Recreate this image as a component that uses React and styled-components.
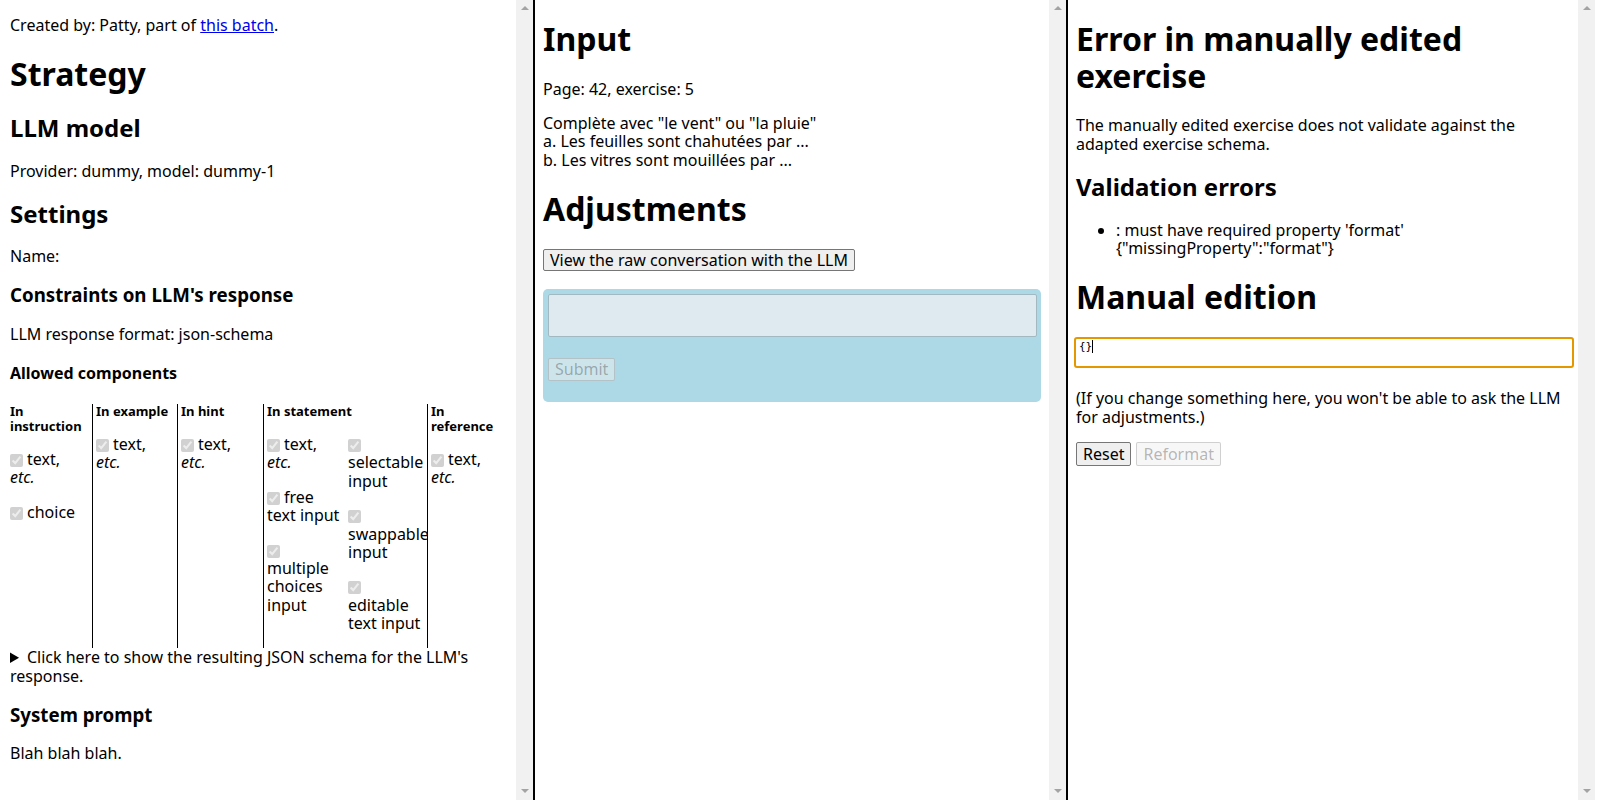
import React from "react";
import styled, { createGlobalStyle } from "styled-components";

const GlobalStyle = createGlobalStyle`
  html, body {
    margin: 0;
    padding: 0;
  }
  body {
    font-family: "Noto Sans", "Open Sans", sans-serif;
    font-size: 16px;
    line-height: 1.15;
    color: #000;
    background: #fff;
  }
`;

const Layout = styled.div`
  display: grid;
  grid-template-columns: 533px 533px 529px;
  height: 100vh;
`;

const Column = styled.section`
  box-sizing: border-box;
  height: 100vh;
  display: flex;
  border-left: ${(p) => (p.$divided ? "2px solid #000" : "0")};
  background: #fff;
`;

const ColumnBody = styled.div`
  flex: 1 1 auto;
  min-width: 0;
  box-sizing: border-box;
  overflow-y: auto;
  padding: ${(p) => p.$pad};
`;

const ScrollTrack = styled.div`
  flex: 0 0 17px;
  box-sizing: border-box;
  background: #f1f1f1;
  display: flex;
  flex-direction: column;
  justify-content: space-between;
  align-items: center;
  padding: 6px 0 7px;
`;

const ArrowIcon = styled.svg`
  display: block;
  width: 8px;
  height: 4px;
  fill: #a3a3a3;
`;

function Scrollbar() {
  return (
    <ScrollTrack aria-hidden="true">
      <ArrowIcon viewBox="0 0 8 4">
        <polygon points="0,4 4,0 8,4" />
      </ArrowIcon>
      <ArrowIcon viewBox="0 0 8 4">
        <polygon points="0,0 8,0 4,4" />
      </ArrowIcon>
    </ScrollTrack>
  );
}

const P = styled.p`
  margin: 16px 0;
`;

const H1 = styled.h1`
  font-size: 32px;
  font-weight: 700;
  margin: 21.44px 0;
`;

const H2 = styled.h2`
  font-size: 24px;
  font-weight: 700;
  margin: 19.92px 0;
`;

const H3 = styled.h3`
  font-size: 18.72px;
  font-weight: 700;
  margin: 18.72px 0;
`;

const H4 = styled.h4`
  font-size: 16px;
  font-weight: 700;
  margin: 21.28px 0;
`;

const Link = styled.a`
  color: #0000ee;
  text-decoration: underline;
`;

const ComponentsGrid = styled.div`
  display: grid;
  grid-template-columns: 82px 85px 86px 164px 80px;
  align-items: stretch;
`;

const Cell = styled.div`
  box-sizing: border-box;
  border-left: ${(p) => (p.$first ? "0" : "1px solid #000")};
  padding: ${(p) => p.$pad};
  overflow: hidden;
  min-width: 0;
`;

const CellHeader = styled.div`
  font-size: 13px;
  font-weight: 700;
  line-height: 1.15;
`;

const SubColumns = styled.div`
  display: grid;
  grid-template-columns: 81px 76px;
`;

const SubColumn = styled.div`
  min-width: 0;
  padding-right: ${(p) => p.$padRight || "0"};
`;

const Item = styled.p`
  margin: 16px 0;
`;

const Checkbox = styled.input.attrs({
  type: "checkbox",
  defaultChecked: true,
  disabled: true,
})`
  width: 13px;
  height: 13px;
  margin: 0 4px 0 0;
  vertical-align: -2px;
`;

const Details = styled.details`
  margin: 0;
`;

const Summary = styled.summary`
  cursor: default;
`;

const ButtonRow = styled.div`
  display: flex;
  gap: 5px;
  margin: 16px 0;
`;

const Button = styled.button`
  font-family: inherit;
  font-size: 16px;
  line-height: 1.15;
  margin: 0;
  padding: ${(p) => (p.$tall ? "2px 6px" : "1px 6px")};
  border-radius: 2px;
  border: 1px solid
    ${(p) => (p.disabled ? "rgba(118, 118, 118, 0.3)" : "#767676")};
  background: ${(p) =>
    p.disabled ? "rgba(239, 239, 239, 0.5)" : "#efefef"};
  color: ${(p) => (p.disabled ? "rgba(16, 16, 16, 0.3)" : "#000")};
`;

const AdjustmentBox = styled.div`
  margin-top: 18px;
  background: #add8e6;
  border-radius: 5px;
  padding: 5px 4px 21px 5px;
  display: flex;
  flex-direction: column;
  align-items: flex-start;
`;

const AdjustmentText = styled.textarea`
  display: block;
  box-sizing: border-box;
  width: 100%;
  height: 43px;
  margin: 0;
  padding: 2px;
  resize: none;
  background: #dfeaf0;
  border: 1px solid #a3b9c1;
  border-radius: 2px;
  font-family: "DejaVu Sans Mono", monospace;
  font-size: 13px;
`;

const SubmitButton = styled(Button)`
  margin-top: 21px;
`;

const ErrorList = styled.ul`
  margin: 16px 0;
  padding-left: 40px;
`;

const CodeBox = styled.div`
  box-sizing: border-box;
  height: 31px;
  margin: 21px -2px;
  padding: 1px 3px;
  border: 2px solid #e59700;
  border-radius: 3px;
  font-family: "DejaVu Sans Mono", "Liberation Mono", monospace;
  font-size: 11px;
  line-height: 1.15;
`;

const Caret = styled.span`
  display: inline-block;
  width: 1px;
  height: 13px;
  background: #000;
  vertical-align: -3px;
`;

function TextEtc() {
  return (
    <>
      <Checkbox />
      text, <em>etc.</em>
    </>
  );
}

function StrategyColumn() {
  return (
    <Column>
      <ColumnBody $pad="0 8px 0 10px">
        <P>
          Created by: Patty, part of <Link href="#">this batch</Link>.
        </P>
        <H1>Strategy</H1>
        <H2>LLM model</H2>
        <P>Provider: dummy, model: dummy-1</P>
        <H2>Settings</H2>
        <P>Name: </P>
        <H3>Constraints on LLM's response</H3>
        <P>LLM response format: json-schema</P>
        <H4>Allowed components</H4>
        <ComponentsGrid>
          <Cell $first $pad="0 6px 0 0">
            <CellHeader>In instruction</CellHeader>
            <Item>
              <TextEtc />
            </Item>
            <Item>
              <Checkbox />
              choice
            </Item>
          </Cell>
          <Cell $pad="0 5px 0 3px">
            <CellHeader>In example</CellHeader>
            <Item>
              <TextEtc />
            </Item>
          </Cell>
          <Cell $pad="0 6px 0 3px">
            <CellHeader>In hint</CellHeader>
            <Item>
              <TextEtc />
            </Item>
          </Cell>
          <Cell $pad="0 3px 0 3px">
            <CellHeader>In statement</CellHeader>
            <SubColumns>
              <SubColumn $padRight="6px">
                <Item>
                  <TextEtc />
                </Item>
                <Item>
                  <Checkbox />
                  free text input
                </Item>
                <Item>
                  <Checkbox />
                  multiple choices input
                </Item>
              </SubColumn>
              <SubColumn>
                <Item>
                  <Checkbox />
                  selectable input
                </Item>
                <Item>
                  <Checkbox />
                  swappable input
                </Item>
                <Item>
                  <Checkbox />
                  editable text input
                </Item>
              </SubColumn>
            </SubColumns>
          </Cell>
          <Cell $pad="0 5px 0 3px">
            <CellHeader>In reference</CellHeader>
            <Item>
              <TextEtc />
            </Item>
          </Cell>
        </ComponentsGrid>
        <Details>
          <Summary>
            Click here to show the resulting JSON schema for the LLM's
            response.
          </Summary>
        </Details>
        <H3>System prompt</H3>
        <P>Blah blah blah.</P>
      </ColumnBody>
      <Scrollbar />
    </Column>
  );
}

function InputColumn() {
  return (
    <Column $divided>
      <ColumnBody $pad="0 8px 0 8px">
        <H1>Input</H1>
        <P>Page: 42, exercise: 5</P>
        <P>
          Complète avec "le vent" ou "la pluie"
          <br />
          a. Les feuilles sont chahutées par ...
          <br />
          b. Les vitres sont mouillées par ...
        </P>
        <H1>Adjustments</H1>
        <ButtonRow>
          <Button>View the raw conversation with the LLM</Button>
        </ButtonRow>
        <AdjustmentBox>
          <AdjustmentText defaultValue="" />
          <SubmitButton disabled>Submit</SubmitButton>
        </AdjustmentBox>
      </ColumnBody>
      <Scrollbar />
    </Column>
  );
}

function EditionColumn() {
  return (
    <Column $divided>
      <ColumnBody $pad="0 6px 0 8px">
        <H1>Error in manually edited exercise</H1>
        <P>
          The manually edited exercise does not validate against the adapted
          exercise schema.
        </P>
        <H2>Validation errors</H2>
        <ErrorList>
          <li>
            : must have required property 'format'
            <br />
            {'{"missingProperty":"format"}'}
          </li>
        </ErrorList>
        <H1>Manual edition</H1>
        <CodeBox>
          {"{}"}
          <Caret />
        </CodeBox>
        <P>
          (If you change something here, you won't be able to ask the LLM for
          adjustments.)
        </P>
        <ButtonRow>
          <Button $tall>Reset</Button>
          <Button $tall disabled>
            Reformat
          </Button>
        </ButtonRow>
      </ColumnBody>
      <Scrollbar />
    </Column>
  );
}

export default function App() {
  return (
    <>
      <GlobalStyle />
      <Layout>
        <StrategyColumn />
        <InputColumn />
        <EditionColumn />
      </Layout>
    </>
  );
}
